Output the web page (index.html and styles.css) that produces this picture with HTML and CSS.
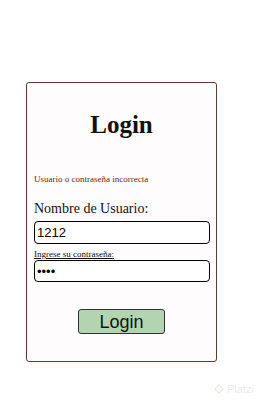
FILE: index.html
```html
<!DOCTYPE html>
<html lang="es">

<head>
    <meta charset="UTF-8" />
    <title>Login</title>
    <link rel="stylesheet" href="styles.css">
</head>

<body>
    <!-- formulario de login -->
    <form class="login-box">
        <h1 class="login-title">Login</h1>
        <p class="error-msg">Usuario o contraseña incorrecta</p>

        <label class="label-big" for="user">Nombre de Usuario:</label>
        <input class="field" id="user" type="text" value="1212" />

        <label class="label-small" for="pass">Ingrese su contraseña:</label>
        <input class="field" id="pass" type="password" value="1212" />

        <div class="btn-row">
            <button class="btn-login" type="button">Login</button>
        </div>
    </form>

    <!-- marca de agua -->
    <div class="watermark">
        <svg width="10" height="10" viewBox="0 0 10 10">
            <path d="M5 1 L9 5 L5 9 L1 5 Z" fill="none" stroke="#ededdf" stroke-width="1.4" />
        </svg>
        <span>Platzi</span>
    </div>
</body>

</html>
```

FILE: styles.css
```css
* {
    margin: 0;
    padding: 0;
    box-sizing: border-box;
}

body {
    background: #fff;
    font-family: "Liberation Serif", serif;
    color: #111;
}

.login-box {
    display: flex;
    flex-direction: column;
    width: 191px;
    height: 280px;
    margin: 82px 0 0 26px;
    padding: 0 7px;
    border: 1px solid #5a3b2e;
    border-radius: 3px;
    background: #fffcfd;
}

.login-title {
    margin-top: 27px;
    font-size: 25px;
    font-weight: bold;
    text-align: center;
    line-height: 30px;
}

.error-msg {
    margin-top: 33px;
    font-size: 9px;
    line-height: 12px;
    color: #5e2a22;
}

.label-big {
    margin-top: 15px;
    font-size: 14px;
    line-height: 18px;
}

.label-small {
    margin-top: 4px;
    font-size: 9px;
    line-height: 12px;
    text-decoration: underline;
}

.field {
    width: 176px;
    height: 23px;
    margin-top: 3px;
    padding: 0 2px;
    border: 1px solid #000;
    border-radius: 4px;
    background: #fff;
    font-family: "Liberation Sans", sans-serif;
    font-size: 13px;
    color: #000;
}

#pass {
    height: 22px;
    margin-top: 0;
}

.btn-row {
    display: flex;
    justify-content: center;
    margin-top: 27px;
}

.btn-login {
    width: 87px;
    height: 25px;
    border: 1px solid #333;
    border-radius: 3px;
    background: #b3d4b0;
    font-family: "Liberation Sans", sans-serif;
    font-size: 18px;
    line-height: 22px;
    color: #111;
}

.watermark {
    position: absolute;
    left: 214px;
    top: 383px;
    display: flex;
    align-items: center;
    gap: 3px;
    font-family: "Liberation Sans", sans-serif;
    font-size: 11px;
    color: #ebebeb;
}
```
